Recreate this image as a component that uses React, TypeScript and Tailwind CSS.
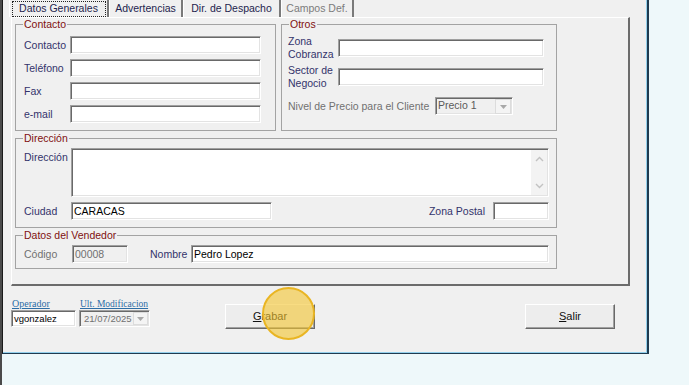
import type { ReactNode } from 'react';

const LABEL = 'text-[#33336b]';
const GRAY = 'text-[#707070]';

function Box({ className = '', disabled = false, children }: { className?: string; disabled?: boolean; children?: ReactNode }) {
    return (
        <div
            className={`flex items-center pl-[2px] whitespace-nowrap border border-t-[#a0a0a0] border-l-[#a0a0a0] border-r-white border-b-white shadow-[inset_1px_1px_0_#696969,inset_-1px_-1px_0_#e3e3e3] ${disabled ? 'bg-[#f0f0f0] text-[#707070]' : 'bg-white text-black'} ${className}`}
        >
            {children}
        </div>
    );
}

function Group({ title, className = '', children }: { title: string; className?: string; children?: ReactNode }) {
    return (
        <fieldset className={`border border-[#a3a3a3] ${className}`}>
            <legend className="ml-[7px] px-[1px] leading-[13px] text-[#7f1010] whitespace-nowrap">{title}</legend>
            {children}
        </fieldset>
    );
}

function DropArrow({ className = '' }: { className?: string }) {
    return (
        <div className={`flex items-center justify-center bg-[#f4f4f4] border border-[#dcdcdc] ${className}`}>
            <svg width="7" height="4" viewBox="0 0 7 4">
                <path d="M0 0h7L3.5 4z" fill="#a8a8a8" />
            </svg>
        </div>
    );
}

function Btn({ children, className = '' }: { children: ReactNode; className?: string }) {
    return (
        <button className={`w-[90px] h-[25px] flex items-center justify-center bg-[#ededed] border border-t-white border-l-white border-r-[#696969] border-b-[#696969] shadow-[inset_-1px_-1px_0_#a0a0a0] text-[11px] text-[#111] ${className}`}>
            {children}
        </button>
    );
}

const tabs = [
    { label: 'Datos Generales', w: 'w-[100px]', active: true },
    { label: 'Advertencias', w: 'w-[74px]' },
    { label: 'Dir. de Despacho', w: 'w-[98px]' },
    { label: 'Campos Def.', w: 'w-[73px]', disabled: true },
];

export default function App() {
    return (
        <div className="w-[689px] h-[385px] overflow-hidden bg-[#eef8fa] border-l-2 border-l-[#4a4a4a] font-['Liberation_Sans',Arial,sans-serif] text-[10.5px] leading-[13px]">
            <div className="w-[647px] h-[354px] flex flex-col bg-[#f0f0f0] border-l border-l-[#1a1a1a] border-r-2 border-r-[#1f3b50] border-b border-b-[#1f3b50] shadow-[inset_-1px_-1px_0_#93d0ec]">
                {/* Tab control */}
                <div className="ml-[8px] w-[619px] flex flex-col">
                    <div className="flex h-[17px] -ml-[2px]">
                        {tabs.map((t) => (
                            <div
                                key={t.label}
                                className={`${t.w} h-full flex items-center justify-center whitespace-nowrap border-l border-l-white border-r-2 border-r-[#7a7a7a] ${t.disabled ? 'text-[#7c7c7c]' : 'text-[#1e1e4e]'}`}
                            >
                                {t.active ? (
                                    <span className="h-[16px] w-[94px] flex items-center justify-center border border-dotted border-[#222]">{t.label}</span>
                                ) : (
                                    t.label
                                )}
                            </div>
                        ))}
                    </div>

                    <div className="h-[269px] flex flex-col pl-[3px] border-t border-l border-t-white border-l-white border-r-2 border-b-2 border-r-[#6b6b6b] border-b-[#6b6b6b]">
                        <div className="flex gap-[5px]">
                            <Group title="Contacto" className="w-[261px] h-[113px]">
                                <div className="flex flex-col gap-[5px] mt-[5px] pl-[8px]">
                                    {['Contacto', 'Teléfono', 'Fax', 'e-mail'].map((l) => (
                                        <div key={l} className="flex items-center h-[18px]">
                                            <span className={`w-[46px] ${LABEL}`}>{l}</span>
                                            <Box className="w-[191px] h-[18px]" />
                                        </div>
                                    ))}
                                </div>
                            </Group>

                            <Group title="Otros" className="w-[276px] h-[113px]">
                                <div className="flex flex-col pl-[6px]">
                                    <div className="flex items-center h-[26px] mt-[4px]">
                                        <span className={`w-[50px] leading-[13px] ${LABEL}`}>Zona<br />Cobranza</span>
                                        <Box className="w-[206px] h-[18px]" />
                                    </div>
                                    <div className="flex items-center h-[26px] mt-[3px]">
                                        <span className={`w-[50px] leading-[13px] whitespace-nowrap ${LABEL}`}>Sector de<br />Negocio</span>
                                        <Box className="w-[206px] h-[18px]" />
                                    </div>
                                    <div className="flex items-center h-[18px] mt-[7px]">
                                        <span className={`w-[147px] whitespace-nowrap ${GRAY}`}>Nivel de Precio para el Cliente</span>
                                        <Box disabled className="w-[78px] h-[18px] items-start pr-[1px]">
                                            <span className="flex-1 pt-[1px] text-[#5a5a5a]">Precio 1</span>
                                            <DropArrow className="w-[16px] h-[15px] mt-[1px]" />
                                        </Box>
                                    </div>
                                </div>
                            </Group>
                        </div>

                        <Group title="Dirección" className="mt-[1px] w-[542px] h-[96px]">
                            <div className="flex flex-col pl-[8px] pr-[7px]">
                                <div className="flex mt-[3px]">
                                    <span className={`w-[47px] pt-[3px] ${LABEL}`}>Dirección</span>
                                    <Box className="w-[478px] h-[49px] items-stretch justify-end pr-[1px] pt-[1px] pb-[1px]">
                                        <div className="w-[16px] bg-[#f3f3f3] flex flex-col items-center justify-between py-[6px]">
                                            <svg width="9" height="6" viewBox="0 0 9 6">
                                                <path d="M1 5L4.5 1.5L8 5" stroke="#c2c2c2" strokeWidth="1.4" fill="none" />
                                            </svg>
                                            <svg width="9" height="6" viewBox="0 0 9 6">
                                                <path d="M1 1L4.5 4.5L8 1" stroke="#c2c2c2" strokeWidth="1.4" fill="none" />
                                            </svg>
                                        </div>
                                    </Box>
                                </div>
                                <div className="flex items-center h-[18px] mt-[5px]">
                                    <span className={`w-[47px] ${LABEL}`}>Ciudad</span>
                                    <Box className="w-[201px] h-[18px]">CARACAS</Box>
                                    <div className="flex-1 flex items-center justify-end">
                                        <span className={`mr-[8px] ${LABEL}`}>Zona Postal</span>
                                        <Box className="w-[56px] h-[18px]" />
                                    </div>
                                </div>
                            </div>
                        </Group>

                        <Group title="Datos del Vendedor" className="mt-[1px] w-[542px] h-[40px]">
                            <div className="flex items-center h-[18px] mt-[3px] pl-[8px] pr-[7px]">
                                <span className={`w-[48px] ${GRAY}`}>Código</span>
                                <Box disabled className="w-[56px] h-[18px]">00008</Box>
                                <span className={`ml-[22px] w-[41px] ${LABEL}`}>Nombre</span>
                                <Box className="flex-1 h-[18px]">Pedro Lopez</Box>
                            </div>
                        </Group>
                    </div>
                </div>

                {/* Footer */}
                <div className="flex items-start pl-[8px] pt-[12px]">
                    <div className="flex flex-col w-[65px]">
                        <span className="h-[12px] leading-[12px] pl-[1px] text-[10px] underline text-[#2d6ea6] font-['Liberation_Serif',serif]">Operador</span>
                        <Box className="w-[65px] h-[17px] text-[9.5px] text-[#222]">vgonzalez</Box>
                    </div>
                    <div className="flex flex-col ml-[3px] w-[71px]">
                        <span className="h-[12px] leading-[12px] pl-[1px] text-[9.5px] underline text-[#2d6ea6] font-['Liberation_Serif',serif] whitespace-nowrap">Ult. Modificacion</span>
                        <Box disabled className="w-[71px] h-[17px] text-[9.5px] pr-[1px]">
                            <span className="flex-1 pl-[2px]">21/07/2025</span>
                            <DropArrow className="w-[15px] h-[13px]" />
                        </Box>
                    </div>
                    <div className="relative ml-[75px] mt-[6px]">
                        <Btn>
                            <span><span className="underline">G</span>rabar</span>
                        </Btn>
                        <div className="absolute left-[37px] -top-[17px] w-[53px] h-[53px] rounded-full bg-[rgba(243,196,46,0.6)] border-2 border-[#e9b523]" />
                    </div>
                    <Btn className="ml-[210px] mt-[6px]">
                        <span><span className="underline">S</span>alir</span>
                    </Btn>
                </div>
            </div>
        </div>
    );
}
